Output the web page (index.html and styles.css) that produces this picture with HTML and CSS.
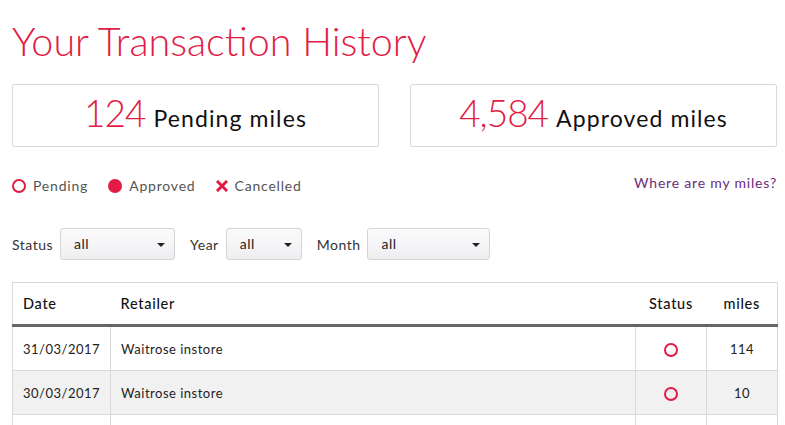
FILE: index.html
```html
<!DOCTYPE html>
<html lang="en">
<head>
    <meta charset="UTF-8">
    <meta name="viewport" content="width=device-width, initial-scale=1.0">
    <title>Your Transaction History</title>
    <link rel="stylesheet" href="styles.css">
</head>
<body>
    <h1 class="page-title">Your Transaction History</h1>

    <!-- totals -->
    <div class="totals">
        <div class="total-box"><span class="total-num">124</span> Pending miles</div>
        <div class="total-box"><span class="total-num">4,584</span> Approved miles</div>
    </div>

    <!-- key for the status icons -->
    <div class="legend-row">
        <div class="legend">
            <span class="legend-item"><span class="dot dot-pending"></span>Pending</span>
            <span class="legend-item"><span class="dot dot-approved"></span>Approved</span>
            <span class="legend-item">
                <svg class="cross" viewBox="0 0 12 12" width="12" height="12"><path d="M2 2 L10 10 M10 2 L2 10" stroke="#e21c45" stroke-width="3" stroke-linecap="square"/></svg>Cancelled
            </span>
        </div>
        <a class="help-link" href="#">Where are my miles?</a>
    </div>

    <!-- filters -->
    <div class="filters">
        <label class="filter-label">Status</label>
        <div class="select select-status">all<span class="caret"></span></div>
        <label class="filter-label">Year</label>
        <div class="select select-year">all<span class="caret"></span></div>
        <label class="filter-label">Month</label>
        <div class="select select-month">all<span class="caret"></span></div>
    </div>

    <table class="history">
        <thead>
            <tr>
                <th class="col-date">Date</th>
                <th>Retailer</th>
                <th class="col-status">Status</th>
                <th class="col-miles">miles</th>
            </tr>
        </thead>
        <tbody>
            <tr>
                <td>31/03/2017</td>
                <td>Waitrose instore</td>
                <td class="col-status"><span class="dot dot-pending"></span></td>
                <td class="col-miles">114</td>
            </tr>
            <tr>
                <td>30/03/2017</td>
                <td>Waitrose instore</td>
                <td class="col-status"><span class="dot dot-pending"></span></td>
                <td class="col-miles">10</td>
            </tr>
            <tr>
                <td>&nbsp;</td>
                <td></td>
                <td class="col-status"></td>
                <td class="col-miles"></td>
            </tr>
        </tbody>
    </table>
</body>
</html>
```

FILE: styles.css
```css
body {
    margin: 0;
    padding: 0 8px 0 12px;
    font-family: "Lato", "Open Sans", sans-serif;
    color: #222;
    background: #fff;
    overflow: hidden;
}
.page-title {
    margin: 18px 0 0;
    font-size: 39.5px;
    font-weight: 300;
    color: #e21c45;
    line-height: 46px;
}
.totals {
    display: flex;
    gap: 31px;
    margin-top: 20px;
}
.total-box {
    flex: 1;
    height: 61px;
    border: 1px solid #d9d9d9;
    border-radius: 2px;
    display: flex;
    align-items: baseline;
    justify-content: center;
    gap: 8px;
    font-size: 23px;
    letter-spacing: 1.1px;
    color: #111;
    line-height: 55px;
}
.total-num {
    font-size: 37px;
    font-weight: 300;
    letter-spacing: -1px;
    color: #e21c45;
}
.legend-row {
    display: flex;
    justify-content: space-between;
    align-items: center;
    margin-top: 30px;
    font-size: 14px;
    letter-spacing: 0.8px;
}
.legend {
    display: flex;
    gap: 20px;
    color: #555;
}
.legend-item {
    display: flex;
    align-items: center;
    gap: 7px;
}
.dot {
    display: inline-block;
    width: 14px;
    height: 14px;
    border-radius: 50%;
    box-sizing: border-box;
}
.dot-pending {
    border: 2px solid #e21c45;
}
.dot-approved {
    background: #e21c45;
}
.help-link {
    color: #6a2c7a;
    text-decoration: none;
    margin-top: -6px;
}
.filters {
    display: flex;
    align-items: center;
    margin-top: 34px;
    font-size: 14px;
    letter-spacing: 0.5px;
    color: #333;
}
.filter-label {
    margin-right: 7px;
}
.select {
    position: relative;
    height: 32px;
    line-height: 30px;
    padding-left: 13px;
    box-sizing: border-box;
    border: 1px solid #d4d4d4;
    border-radius: 3px;
    background: linear-gradient(#fbfbfc, #efedf1);
    margin-right: 15px;
    color: #222;
}
.select-status { width: 115px; }
.select-year { width: 76px; }
.select-month { width: 123px; }
.caret {
    position: absolute;
    right: 9px;
    top: 14px;
    border-left: 4px solid transparent;
    border-right: 4px solid transparent;
    border-top: 4px solid #222;
}
.history {
    margin-top: 22px;
    width: 766px;
    border-collapse: collapse;
    border: 1px solid #d9d9d9;
    font-size: 13px;
    letter-spacing: 0.5px;
}
.history th {
    text-align: left;
    font-size: 14.5px;
    font-weight: 500;
    letter-spacing: 0.7px;
    color: #111;
    height: 41px;
    padding: 0 10px;
    border-bottom: 3px solid #666;
}
.history td {
    height: 43px;
    padding: 0 10px;
    border: 1px solid #d9d9d9;
    color: #222;
}
.history tbody tr:nth-child(even) td {
    background: #f1f1f1;
}
.col-date {
    width: 76px;
}
.history .col-status {
    width: 50px;
    text-align: center;
}
.history .col-miles {
    width: 50px;
    text-align: center;
}
.history td .dot {
    vertical-align: middle;
}
```
